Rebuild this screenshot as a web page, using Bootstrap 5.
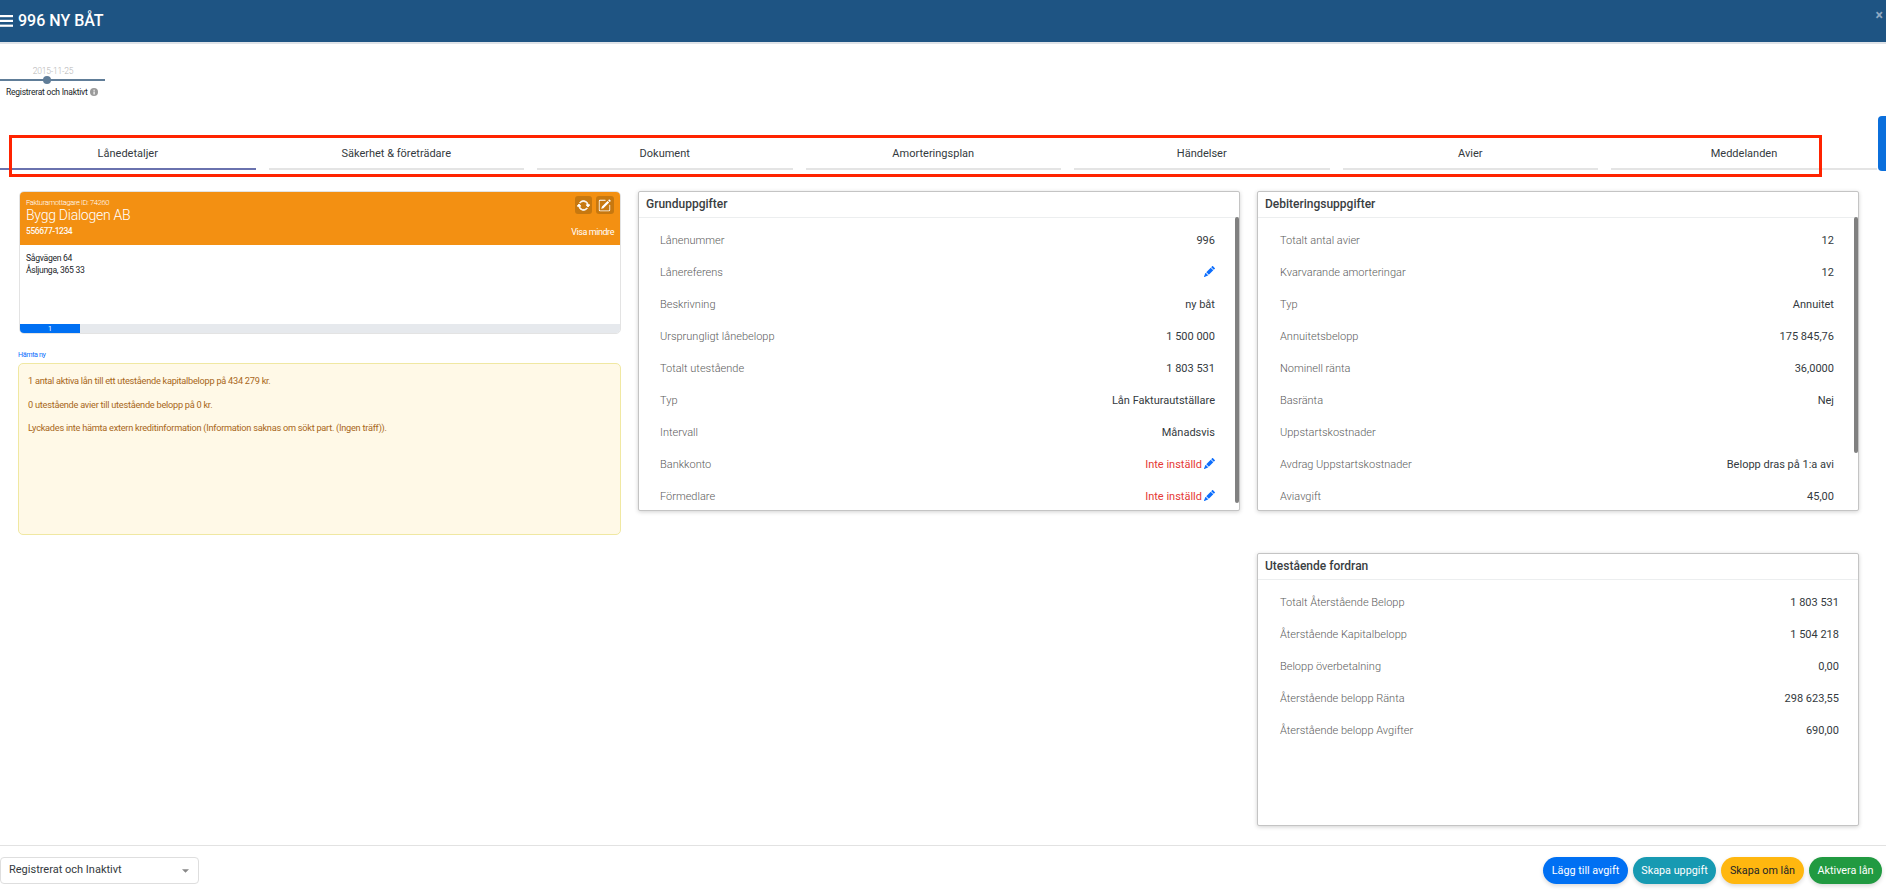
<!DOCTYPE html>
<html lang="sv">
<head>
<meta charset="utf-8">
<title>996 NY BÅT</title>
<link href="https://cdn.jsdelivr.net/npm/bootstrap@5.3.0/dist/css/bootstrap.min.css" rel="stylesheet">
<style>
html,body{height:891px;overflow:hidden}
body{font-family:Roboto,"Liberation Sans",sans-serif;font-size:11px;color:#212529;background:#fff;font-weight:400}
.page-shell{height:891px}
.top-head{height:44px;background:#1e5483;border-bottom:2px solid #dfe3e8;color:#fff;padding-left:0}
.top-head .ttl{font-size:16px;font-weight:500;margin-left:5px;line-height:1}
.top-close{position:absolute;right:3px;top:8px;color:#8fa9c2;font-size:14px;line-height:1;font-weight:700}
.tl-wrap{height:91px;padding-top:21px;position:relative}
.tl-date{width:105px;text-align:center;font-size:8.5px;letter-spacing:-.2px;color:#b5b5b5;font-weight:300;line-height:12px;padding-left:1px}
.tl-line{width:105px;height:2px;background:#607d98;position:relative;margin-top:2px}
.tl-dot{position:absolute;left:43px;top:-3px;width:8px;height:8px;border-radius:50%;background:#607d98}
.tl-label{font-size:8.5px;letter-spacing:-.23px;line-height:12px;margin:5px 0 0 6px;color:#212529}
.tl-i{display:inline-block;width:8px;height:8px;margin-left:2px;vertical-align:-1px}
.tab-strip{position:relative;height:35px;gap:13px}
.tab-item{width:255.5px;flex:0 0 255.5px;text-align:center;border-bottom:2px solid #e4e4e4;color:#343a40;font-size:11px;padding-top:12px;line-height:14px;height:35px}
.tab-item.is-on{border-bottom-color:#6a72ae}
.tab-item.tab-last{flex:0 0 266px;width:266px}
.red-box{position:absolute;left:9px;top:0;width:1813px;height:42px;border:3px solid #ff2300;pointer-events:none}
.side-flag{position:absolute;right:0;top:116px;width:8px;height:55px;background:#0b6fdc;border-radius:4px 0 0 4px}
.content-wrap{padding:21px 27px 0 19px}
.content-wrap .row{--bs-gutter-x:17px;--bs-gutter-y:0}
.org-card{border:1px solid #e3e3e3;border-radius:5px;overflow:hidden;height:143px;background:#fff}
.org-head{background:#f39012;color:#fff;height:53px;padding:4px 6px 0 6px;position:relative}
.org-id{font-size:7.6px;letter-spacing:-.38px;line-height:11px;font-weight:300;margin-top:1px}
.org-name{font-size:14px;letter-spacing:-.25px;font-weight:300;line-height:14px}
.org-nr{font-size:8.5px;letter-spacing:-.45px;font-weight:500;line-height:12px;margin-top:3px;opacity:.95}
.org-more{font-size:9px;letter-spacing:-.43px;line-height:12px;font-weight:400}
.ico-btn{width:17px;height:18px;background:#c7780f;border-radius:3px;color:#fff}
.ico-btn.wide{width:18px}
.ico-btn svg{width:13px;height:13px}
.org-col{padding-bottom:7px}
.org-body{height:79px;padding:7px 6px 0;font-size:8.6px;letter-spacing:-.3px;line-height:12px;color:#212529}
.org-bar{height:10px;--bs-progress-bg:#e6e9ed;--bs-progress-bar-bg:#0070f3;--bs-progress-font-size:7px;--bs-progress-border-radius:0;border-radius:0}
.fetch-link{display:block;font-size:7.2px;letter-spacing:-.4px;color:#0d6efd;line-height:10px;margin:16px 0 3px -1px;text-decoration:none}
.warn-box{height:172px;margin:0 0 0 -1px;padding:11px 10px 11px 9px;background:#fff9e7;border:1px solid #f0e8a2;border-radius:5px;color:#a8671a;font-size:9.2px;letter-spacing:-.25px;line-height:12px;--bs-alert-margin-bottom:0}
.warn-box p{margin:0 0 11.5px}
.data-card{border:1px solid #c4c4c4;border-radius:2px;box-shadow:0 1px 4px rgba(0,0,0,.18);height:320px;overflow:hidden;position:relative}
.data-card .card-header{background:#fff;height:26px;padding:0 7px;font-size:12px;font-weight:500;line-height:25px;border-bottom:1px solid #eceeef;color:#3a3e42}
.data-card.tall{height:273px;margin-top:42px}
.data-body{padding:7px 24px 0 22px}
.data-body.mid{padding-left:21px}
.data-body.out{padding-right:19px}
.data-row{height:32px;line-height:32px;display:flex;justify-content:space-between;align-items:center;font-size:11px}
.data-row .lbl{color:#5c5c5c;font-weight:300}
.data-row .val{color:#343a40}
.data-row .val.bad{color:#e53935}
.pen{width:11px;height:11px;color:#0d6efd;margin-left:2px;vertical-align:-1px}
.scroll-thumb{position:absolute;right:0;top:25px;width:4px;background:#808080;border-radius:2px}
.foot{position:absolute;left:0;right:0;top:845px;height:46px;border-top:1px solid #e2e2e2;padding:11px 4px 0 0;background:#fff}
.state-select{width:199px;height:27px;font-size:11px;padding:0 8px;border:1px solid #dedede;border-radius:4px;color:#343a40;box-shadow:none;background-image:url("data:image/svg+xml,%3csvg xmlns='http://www.w3.org/2000/svg' viewBox='0 0 8 4'%3e%3cpath d='M0 0h8L4 4z' fill='%23888'/%3e%3c/svg%3e");background-size:7px 4px;background-position:right 9px center}
.act-btn{height:27px;font-size:10.8px;padding:0;border:0;line-height:27px;box-shadow:0 2px 4px rgba(0,0,0,.15);white-space:nowrap}
.b-blue{width:85px;background:#0070f3;color:#fff}
.b-teal{width:83px;background:#179ab2;color:#fff}
.b-yel{width:83px;background:#ffb70f;color:#212529}
.b-grn{width:73px;background:#219a41;color:#fff}
.act-gap{gap:5px}
</style>
</head>
<body>
<div class="page-shell position-relative">
  <header class="top-head d-flex align-items-center position-relative">
    <svg width="13" height="12" viewBox="0 0 13 12" fill="#fff"><rect y="0" width="13" height="2.2"/><rect y="4.8" width="13" height="2.2"/><rect y="9.6" width="13" height="2.2"/></svg>
    <span class="ttl">996 NY BÅT</span>
    <span class="top-close">×</span>
  </header>

  <section class="tl-wrap">
    <div class="tl-date">2015-11-25</div>
    <div class="tl-line"><span class="tl-dot"></span></div>
    <div class="tl-label">Registrerat och Inaktivt<svg class="tl-i" viewBox="0 0 16 16"><circle cx="8" cy="8" r="8" fill="#9a9a9a"/><rect x="7" y="7" width="2.4" height="6" fill="#fff"/><rect x="7" y="3.4" width="2.4" height="2.2" fill="#fff"/></svg></div>
  </section>

  <nav class="tab-strip d-flex">
    <div class="tab-item is-on">Lånedetaljer</div>
    <div class="tab-item">Säkerhet &amp; företrädare</div>
    <div class="tab-item">Dokument</div>
    <div class="tab-item">Amorteringsplan</div>
    <div class="tab-item">Händelser</div>
    <div class="tab-item">Avier</div>
    <div class="tab-item tab-last">Meddelanden</div>
    <div class="red-box"></div>
  </nav>
  <div class="side-flag"></div>

  <main class="content-wrap">
    <div class="row">
      <div class="col-4">
        <div class="org-card">
          <div class="org-head d-flex justify-content-between">
            <div>
              <div class="org-id">Fakturamottagare ID: 74260</div>
              <div class="org-name">Bygg Dialogen AB</div>
              <div class="org-nr">556677-1234</div>
            </div>
            <div class="org-col d-flex flex-column align-items-end justify-content-between">
              <div class="d-flex gap-1">
                <span class="ico-btn d-flex align-items-center justify-content-center"><svg viewBox="0 0 16 16" fill="currentColor" stroke="currentColor" stroke-width="1"><path d="M11.534 7h3.932a.25.25 0 0 1 .192.41l-1.966 2.36a.25.25 0 0 1-.384 0l-1.966-2.36a.25.25 0 0 1 .192-.41zm-11 2h3.932a.25.25 0 0 0 .192-.41L2.692 6.23a.25.25 0 0 0-.384 0L.342 8.59A.25.25 0 0 0 .534 9z"/><path fill-rule="evenodd" d="M8 3c-1.552 0-2.94.707-3.857 1.818a.5.5 0 1 1-.771-.636A6.002 6.002 0 0 1 13.917 7H12.9A5.002 5.002 0 0 0 8 3zM3.1 9a5.002 5.002 0 0 0 8.757 2.182.5.5 0 1 1 .771.636A6.002 6.002 0 0 1 2.083 9H3.1z"/></svg></span>
                <span class="ico-btn wide d-flex align-items-center justify-content-center"><svg viewBox="0 0 16 16" fill="currentColor"><path d="M15.502 1.94a.5.5 0 0 1 0 .706L14.459 3.69l-2-2L13.502.646a.5.5 0 0 1 .707 0l1.293 1.293zm-1.75 2.456-2-2L4.939 9.21a.5.5 0 0 0-.121.196l-.805 2.414a.25.25 0 0 0 .316.316l2.414-.805a.5.5 0 0 0 .196-.12l6.813-6.814z"/><path fill-rule="evenodd" d="M1 13.5A1.5 1.5 0 0 0 2.5 15h11a1.5 1.5 0 0 0 1.5-1.5v-6a.5.5 0 0 0-1 0v6a.5.5 0 0 1-.5.5h-11a.5.5 0 0 1-.5-.5v-11a.5.5 0 0 1 .5-.5H9a.5.5 0 0 0 0-1H2.5A1.5 1.5 0 0 0 1 2.5v11z"/></svg></span>
              </div>
              <div class="org-more">Visa mindre</div>
            </div>
          </div>
          <div class="org-body">Sågvägen 64<br>Åsljunga, 365 33</div>
          <div class="progress org-bar"><div class="progress-bar" style="width:10%">1</div></div>
        </div>
        <a class="fetch-link" href="#">Hämta ny</a>
        <div class="alert warn-box">
          <p>1 antal aktiva lån till ett utestående kapitalbelopp på 434 279 kr.</p>
          <p>0 utestående avier till utestående belopp på 0 kr.</p>
          <p>Lyckades inte hämta extern kreditinformation (Information saknas om sökt part. (Ingen träff)).</p>
        </div>
      </div>

      <div class="col-4">
        <div class="card data-card">
          <div class="card-header">Grunduppgifter</div>
          <div class="data-body mid">
            <div class="data-row"><span class="lbl">Lånenummer</span><span class="val">996</span></div>
            <div class="data-row"><span class="lbl">Lånereferens</span><span class="val"><svg class="pen" viewBox="0 0 16 16" fill="currentColor"><path d="M12.854.146a.5.5 0 0 0-.707 0L10.5 1.793 14.207 5.5l1.647-1.646a.5.5 0 0 0 0-.708l-3-3zm.646 6.061L9.793 2.5 3.293 9H3.5a.5.5 0 0 1 .5.5v.5h.5a.5.5 0 0 1 .5.5v.5h.5a.5.5 0 0 1 .5.5v.5h.5a.5.5 0 0 1 .5.5v.207l6.5-6.5zm-7.468 7.468A.5.5 0 0 1 6 13.5V13h-.5a.5.5 0 0 1-.5-.5V12h-.5a.5.5 0 0 1-.5-.5V11h-.5a.5.5 0 0 1-.5-.5V10h-.5a.499.499 0 0 1-.175-.032l-.179.178a.5.5 0 0 0-.11.168l-2 5a.5.5 0 0 0 .65.65l5-2a.5.5 0 0 0 .168-.11l.178-.178z"/></svg></span></div>
            <div class="data-row"><span class="lbl">Beskrivning</span><span class="val">ny båt</span></div>
            <div class="data-row"><span class="lbl">Ursprungligt lånebelopp</span><span class="val">1 500 000</span></div>
            <div class="data-row"><span class="lbl">Totalt utestående</span><span class="val">1 803 531</span></div>
            <div class="data-row"><span class="lbl">Typ</span><span class="val">Lån Fakturautställare</span></div>
            <div class="data-row"><span class="lbl">Intervall</span><span class="val">Månadsvis</span></div>
            <div class="data-row"><span class="lbl">Bankkonto</span><span class="val bad">Inte inställd<svg class="pen" viewBox="0 0 16 16" fill="currentColor"><path d="M12.854.146a.5.5 0 0 0-.707 0L10.5 1.793 14.207 5.5l1.647-1.646a.5.5 0 0 0 0-.708l-3-3zm.646 6.061L9.793 2.5 3.293 9H3.5a.5.5 0 0 1 .5.5v.5h.5a.5.5 0 0 1 .5.5v.5h.5a.5.5 0 0 1 .5.5v.5h.5a.5.5 0 0 1 .5.5v.207l6.5-6.5zm-7.468 7.468A.5.5 0 0 1 6 13.5V13h-.5a.5.5 0 0 1-.5-.5V12h-.5a.5.5 0 0 1-.5-.5V11h-.5a.5.5 0 0 1-.5-.5V10h-.5a.499.499 0 0 1-.175-.032l-.179.178a.5.5 0 0 0-.11.168l-2 5a.5.5 0 0 0 .65.65l5-2a.5.5 0 0 0 .168-.11l.178-.178z"/></svg></span></div>
            <div class="data-row"><span class="lbl">Förmedlare</span><span class="val bad">Inte inställd<svg class="pen" viewBox="0 0 16 16" fill="currentColor"><path d="M12.854.146a.5.5 0 0 0-.707 0L10.5 1.793 14.207 5.5l1.647-1.646a.5.5 0 0 0 0-.708l-3-3zm.646 6.061L9.793 2.5 3.293 9H3.5a.5.5 0 0 1 .5.5v.5h.5a.5.5 0 0 1 .5.5v.5h.5a.5.5 0 0 1 .5.5v.5h.5a.5.5 0 0 1 .5.5v.207l6.5-6.5zm-7.468 7.468A.5.5 0 0 1 6 13.5V13h-.5a.5.5 0 0 1-.5-.5V12h-.5a.5.5 0 0 1-.5-.5V11h-.5a.5.5 0 0 1-.5-.5V10h-.5a.499.499 0 0 1-.175-.032l-.179.178a.5.5 0 0 0-.11.168l-2 5a.5.5 0 0 0 .65.65l5-2a.5.5 0 0 0 .168-.11l.178-.178z"/></svg></span></div>
          </div>
          <div class="scroll-thumb" style="height:286px"></div>
        </div>
      </div>

      <div class="col-4">
        <div class="card data-card">
          <div class="card-header">Debiteringsuppgifter</div>
          <div class="data-body">
            <div class="data-row"><span class="lbl">Totalt antal avier</span><span class="val">12</span></div>
            <div class="data-row"><span class="lbl">Kvarvarande amorteringar</span><span class="val">12</span></div>
            <div class="data-row"><span class="lbl">Typ</span><span class="val">Annuitet</span></div>
            <div class="data-row"><span class="lbl">Annuitetsbelopp</span><span class="val">175 845,76</span></div>
            <div class="data-row"><span class="lbl">Nominell ränta</span><span class="val">36,0000</span></div>
            <div class="data-row"><span class="lbl">Basränta</span><span class="val">Nej</span></div>
            <div class="data-row"><span class="lbl">Uppstartskostnader</span><span class="val"></span></div>
            <div class="data-row"><span class="lbl">Avdrag Uppstartskostnader</span><span class="val">Belopp dras på 1:a avi</span></div>
            <div class="data-row"><span class="lbl">Aviavgift</span><span class="val">45,00</span></div>
          </div>
          <div class="scroll-thumb" style="height:236px"></div>
        </div>
        <div class="card data-card tall">
          <div class="card-header">Utestående fordran</div>
          <div class="data-body out">
            <div class="data-row"><span class="lbl">Totalt Återstående Belopp</span><span class="val">1 803 531</span></div>
            <div class="data-row"><span class="lbl">Återstående Kapitalbelopp</span><span class="val">1 504 218</span></div>
            <div class="data-row"><span class="lbl">Belopp överbetalning</span><span class="val">0,00</span></div>
            <div class="data-row"><span class="lbl">Återstående belopp Ränta</span><span class="val">298 623,55</span></div>
            <div class="data-row"><span class="lbl">Återstående belopp Avgifter</span><span class="val">690,00</span></div>
          </div>
        </div>
      </div>
    </div>
  </main>

  <footer class="foot d-flex justify-content-between align-items-start">
    <select class="form-select state-select"><option>Registrerat och Inaktivt</option></select>
    <div class="d-flex act-gap">
      <button class="btn rounded-pill act-btn b-blue">Lägg till avgift</button>
      <button class="btn rounded-pill act-btn b-teal">Skapa uppgift</button>
      <button class="btn rounded-pill act-btn b-yel">Skapa om lån</button>
      <button class="btn rounded-pill act-btn b-grn">Aktivera lån</button>
    </div>
  </footer>
</div>
<script src="https://cdn.jsdelivr.net/npm/bootstrap@5.3.0/dist/js/bootstrap.bundle.min.js"></script>
</body>
</html>
